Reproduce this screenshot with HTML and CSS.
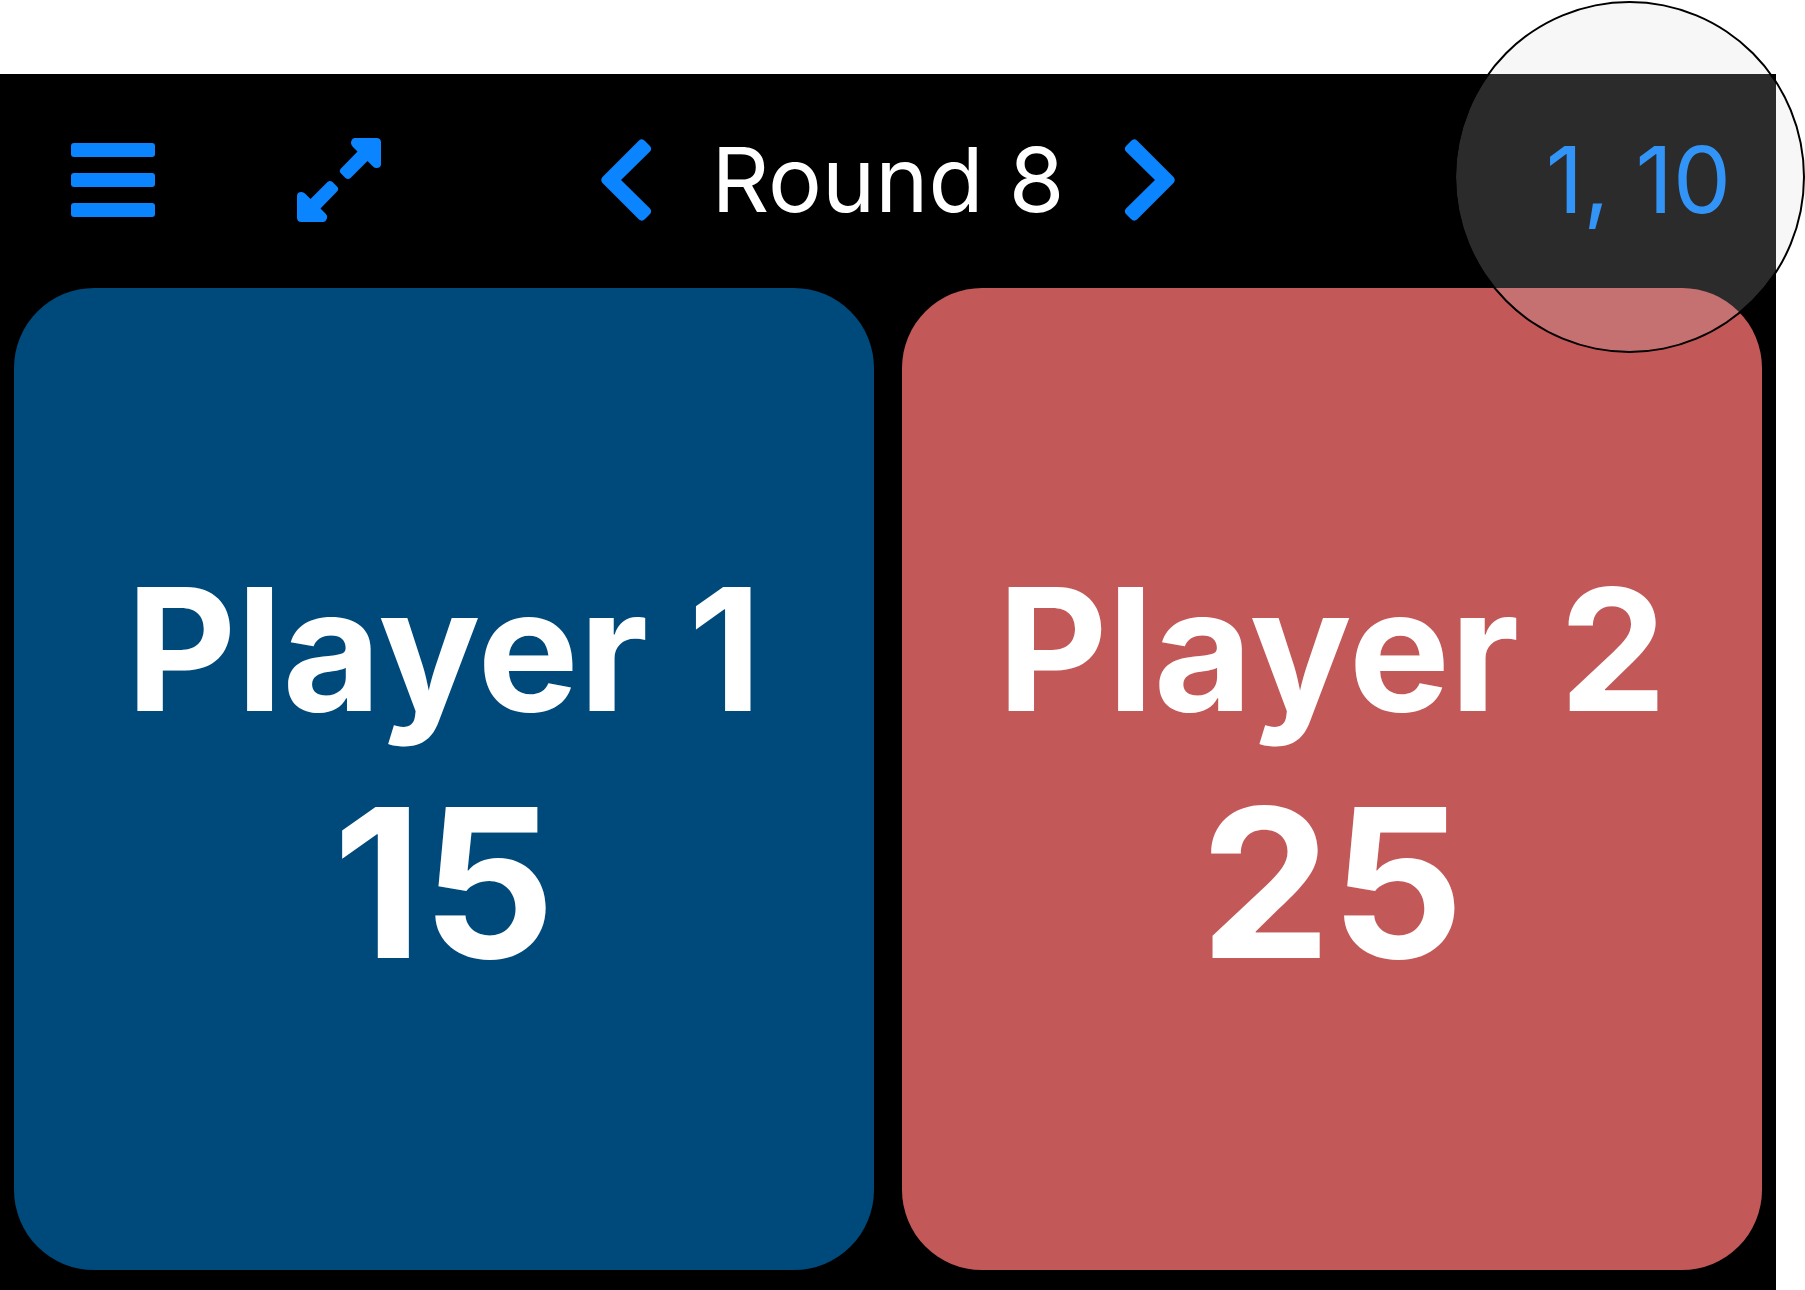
FILE: index.html
```html
<!DOCTYPE html>
<html lang="en">
<head>
  <meta charset="utf-8">
  <meta name="viewport" content="width=device-width, initial-scale=1">
  <title>Round 8</title>
  <link rel="stylesheet" href="styles.css">
</head>
<body>
  <div class="app">
    <header class="toolbar">
      <div class="tools">
        <button class="icon-button" type="button" aria-label="Menu">
          <svg width="84" height="84" viewBox="0 0 84 84" fill="currentColor" aria-hidden="true">
            <rect x="0" y="5" width="84" height="14" rx="3"/>
            <rect x="0" y="35" width="84" height="14" rx="3"/>
            <rect x="0" y="65" width="84" height="14" rx="3"/>
          </svg>
        </button>
        <button class="icon-button" type="button" aria-label="Full screen">
          <svg width="84" height="84" viewBox="0 0 84 84" fill="currentColor" aria-hidden="true">
            <path id="arrow" d="M58 0H79.500Q84 0 84 4.500V26Q84 30 79.500 30Q77.500 30 76 28.500L70.500 23L53.500 40Q51 42 48.500 40L44 35.500Q41.500 33 44 30.500L60.500 13.500L55.500 8.500Q53.500 6.500 54 4Q55 0 58 0Z"/>
            <use href="#arrow" transform="rotate(180 42 42)"/>
          </svg>
        </button>
      </div>
      <nav class="rounds" aria-label="Rounds">
        <button class="icon-button" type="button" aria-label="Previous round">
          <svg width="50" height="82" viewBox="0 0 50 82" fill="currentColor" aria-hidden="true">
            <path id="chevron" d="M38 1.500Q41 -1 44 2L48.500 6.500Q51.500 9.500 49 12.500L20 41L49 69.500Q51.500 72.500 48.500 75.500L44 80Q41 83 38 80.500L1.500 44Q-1 41 1.500 38Z"/>
          </svg>
        </button>
        <h1 class="round">Round 8</h1>
        <button class="icon-button" type="button" aria-label="Next round">
          <svg width="50" height="82" viewBox="0 0 50 82" fill="currentColor" aria-hidden="true">
            <use href="#chevron" transform="rotate(180 25 41)"/>
          </svg>
        </button>
      </nav>
      <button class="steps" type="button">1, 10</button>
    </header>
    <main class="players">
      <button class="player player-blue" type="button">
        <span class="name">Player 1</span>
        <span class="score">15</span>
      </button>
      <button class="player player-red" type="button">
        <span class="name">Player 2</span>
        <span class="score">25</span>
      </button>
    </main>
  </div>
  <div class="spotlight" aria-hidden="true"></div>
</body>
</html>
```

FILE: styles.css
```css
* {
  box-sizing: border-box;
}

body {
  position: relative;
  display: flex;
  flex-direction: column;
  min-height: 100vh;
  margin: 0;
  padding: 74px 29px 0 0;
  background: #fff;
  font-family: Inter, "Liberation Sans", sans-serif;
}

button {
  margin: 0;
  padding: 0;
  border: 0;
  background: none;
  color: inherit;
  font: inherit;
  cursor: pointer;
}

.app {
  display: flex;
  flex: 1;
  flex-direction: column;
  background: #000;
  color: #fff;
}

.toolbar {
  display: grid;
  grid-template-columns: 1fr auto 1fr;
  align-items: center;
  padding: 50px 45px 52px;
}

.tools {
  display: flex;
  gap: 142px;
  padding-left: 26px;
}

.icon-button {
  display: flex;
  color: #0a84ff;
}

.rounds {
  display: flex;
  align-items: center;
  gap: 60px;
}

.round {
  margin: 0;
  font-size: 90px;
  font-weight: 400;
  line-height: 112px;
}

.steps {
  justify-self: end;
  color: #0a84ff;
  font-size: 92px;
  line-height: 112px;
}

.players {
  display: grid;
  flex: 1;
  grid-template-columns: 1fr 1fr;
  gap: 28px;
  padding: 0 14px 20px;
}

.player {
  display: flex;
  flex-direction: column;
  align-items: center;
  justify-content: center;
  border-radius: 80px;
  font-weight: 700;
}

.player-blue {
  background: #00497b;
}

.player-red {
  background: #c25858;
}

.name {
  font-size: 170px;
  line-height: 206px;
}

.score {
  font-size: 208px;
  line-height: 260px;
}

/* Highlight ring over the step setting */
.spotlight {
  position: absolute;
  top: 1px;
  right: 0;
  width: 351px;
  height: 352px;
  border: 2px solid #000;
  border-radius: 50%;
  background: rgb(215 215 215 / 20%);
  background-clip: padding-box;
  pointer-events: none;
}
```
